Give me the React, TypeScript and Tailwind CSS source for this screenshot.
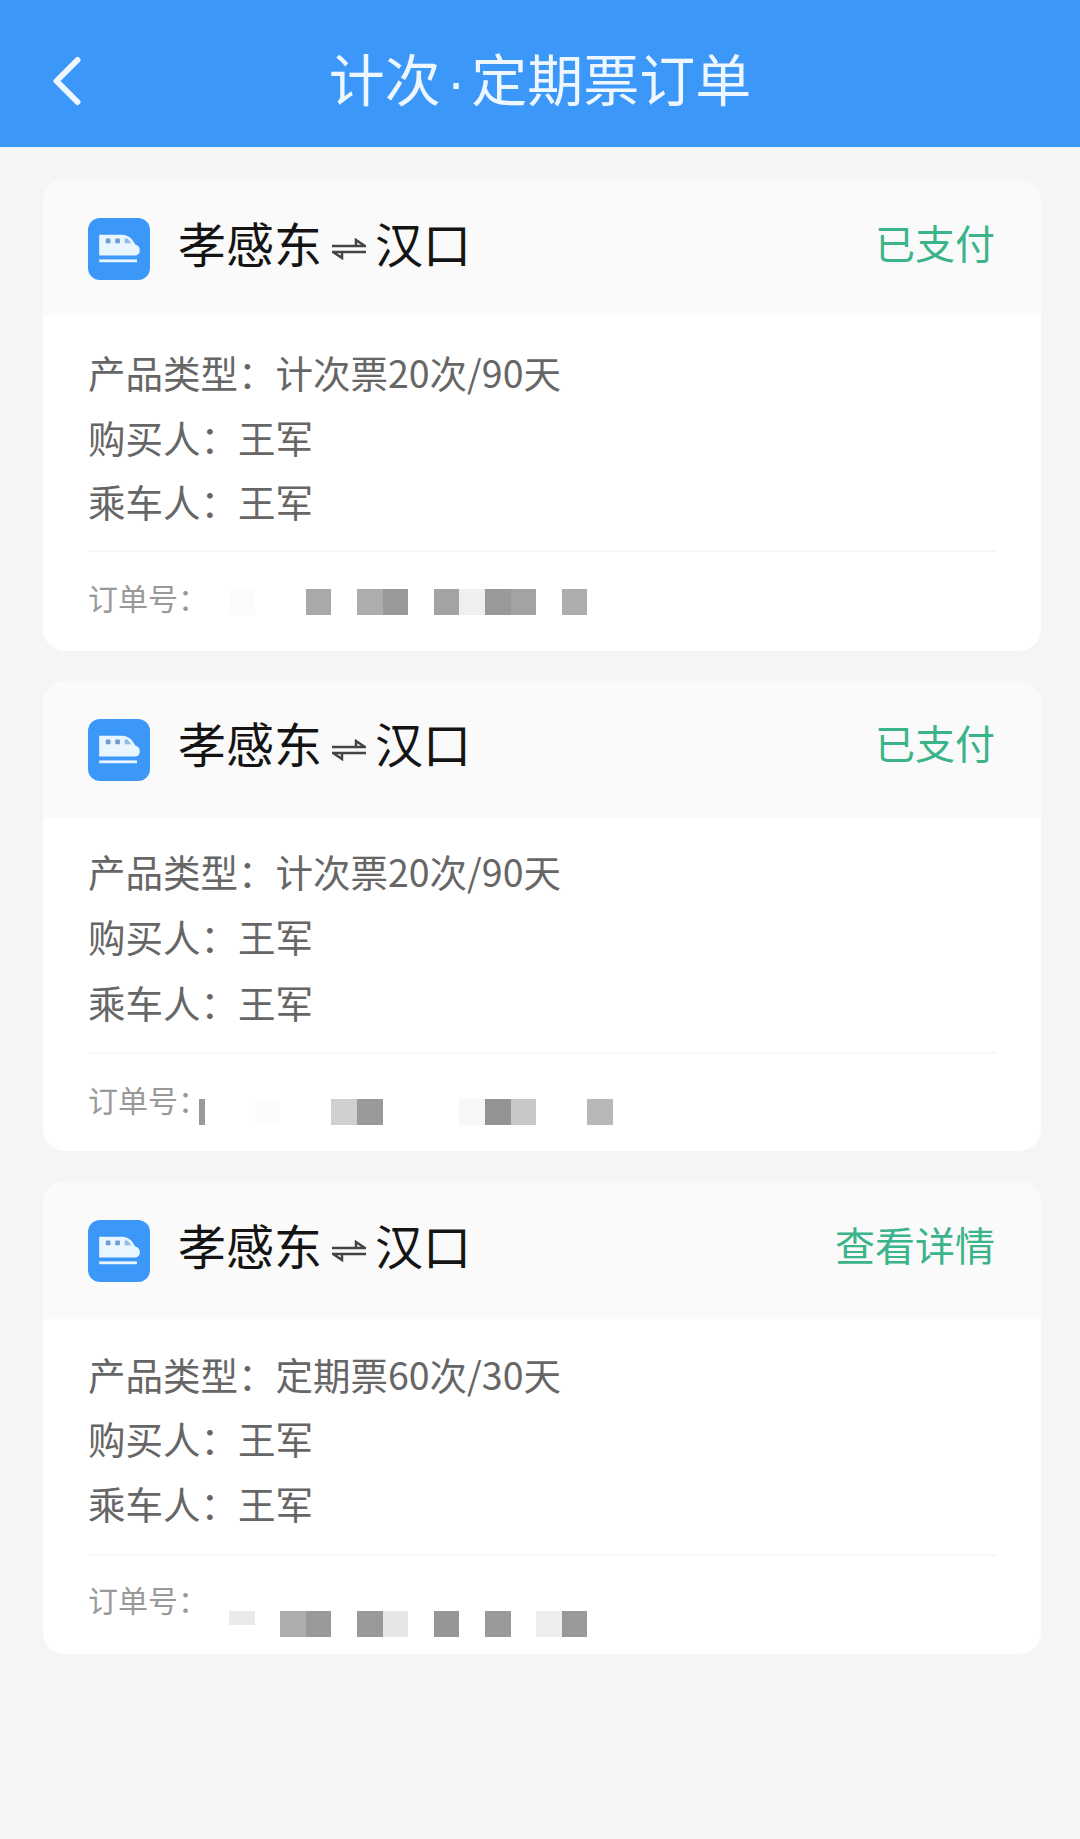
import { ChevronLeft } from 'lucide-react'

// one slot of the pixelated order number, empty string = nothing there
type Order = {
  status: string
  product: string
  cells: string[]
  thinBar?: boolean
  headerCls: string
  rowsCls: string
  firstRowCls: string
  lastRowCls: string
  footerCls: string
  mosaicCls: string
}

const orders: Order[] = [
  {
    status: '已支付',
    product: '计次票20次/90天',
    cells: ['bg-[#fbfbfb]', '', '', 'bg-[#a9a9a9]', '', 'bg-[#adadad]', 'bg-[#999999]', '', 'bg-[#a3a3a3]', 'bg-[#eef0ef]', 'bg-[#999999]', 'bg-[#a3a3a3]', '', 'bg-[#adadad]'],
    headerCls: 'h-[136px] pt-[4px]',
    rowsCls: 'pt-[25px] h-[237px]',
    firstRowCls: 'h-[65px]',
    lastRowCls: 'h-[64px]',
    footerCls: 'pt-[25px] h-[99px]',
    mosaicCls: 'mt-[12px]',
  },
  {
    status: '已支付',
    product: '计次票20次/90天',
    thinBar: true,
    cells: ['', 'bg-[#fcfcfc]', '', '', 'bg-[#d0d0d0]', 'bg-[#999999]', '', '', '', 'bg-[#f7f7f7]', 'bg-[#939393]', 'bg-[#c8c8c8]', '', '', 'bg-[#b8b8b8]'],
    headerCls: 'h-[137px]',
    rowsCls: 'pt-[21px] h-[236px]',
    firstRowCls: 'h-[65px]',
    lastRowCls: 'h-[69px]',
    footerCls: 'pt-[25px] h-[97px]',
    mosaicCls: 'mt-[20px]',
  },
  {
    status: '查看详情',
    product: '定期票60次/30天',
    cells: ['bg-[#e8ebea] !h-[14px]', '', 'bg-[#adadad]', 'bg-[#999999]', '', 'bg-[#999999]', 'bg-[#e6e6e6]', '', 'bg-[#969696]', '', 'bg-[#999999]', '', 'bg-[#eeeeee]', 'bg-[#999999]'],
    headerCls: 'h-[138px] pt-[2px]',
    rowsCls: 'pt-[23px] h-[237px]',
    firstRowCls: 'h-[64px]',
    lastRowCls: 'h-[66px]',
    footerCls: 'pt-[23px] h-[98px]',
    mosaicCls: 'mt-[32px]',
  },
]

function TrainIcon() {
  return (
    <div className="flex h-[62px] w-[62px] shrink-0 items-center justify-center rounded-[12px] bg-[#3b97f8]">
      <svg width="46" height="34" viewBox="0 0 48 36">
        <path d="M3 3h24c8 0 12 6 14 10 3 1 5 3 5 6 0 4-2 6-6 6H3z" fill="#e9f5ff" />
        <rect x="10" y="7" width="5" height="5" rx="1" fill="#6f9fcf" />
        <rect x="20" y="7" width="5" height="5" rx="1" fill="#6f9fcf" />
        <path d="M30 7h3l4 5h-7z" fill="#8fbbe6" />
        <rect x="3" y="29" width="40" height="3" fill="#e9f5ff" />
      </svg>
    </div>
  )
}

function Harpoons() {
  return (
    <svg width="34" height="22" viewBox="0 0 34 22" className="ml-[10px] mr-[9px] mt-[15px] shrink-0">
      <path d="M0 8h33L24 2v6" fill="none" stroke="#444" strokeWidth="2.5" />
      <path d="M34 14H1l9 6v-6" fill="none" stroke="#444" strokeWidth="2.5" />
    </svg>
  )
}

function OrderCard({ order }: { order: Order }) {
  return (
    <div className="overflow-hidden rounded-[22px] bg-white">
      <div className={`flex items-center justify-between bg-[#fafafa] pl-[45px] pr-[46px] ${order.headerCls}`}>
        <div className="flex items-center">
          <TrainIcon />
          <div className="ml-[28px] flex items-center pb-[15px] text-[48px] leading-none text-[#141414]">
            <span>孝感东</span>
            <Harpoons />
            <span>汉口</span>
          </div>
        </div>
        <span className="pb-[15px] text-[40px] leading-none text-[#3bb48a]">{order.status}</span>
      </div>
      <div className="px-[45px]">
        <div className={`border-b-2 border-[#f7f7f7] text-[37.5px] text-[#666666] ${order.rowsCls}`}>
          <div className={`flex items-center ${order.firstRowCls}`}>产品类型：{order.product}</div>
          <div className="flex h-[64px] items-center">购买人：王军</div>
          <div className={`flex items-center ${order.lastRowCls}`}>乘车人：王军</div>
        </div>
        <div className={`flex items-start ${order.footerCls}`}>
          <span className="w-[111px] shrink-0 whitespace-nowrap text-[30px] leading-[40px] text-[#999999]">订单号：</span>
          <div className={`flex w-[30px] shrink-0 ${order.mosaicCls}`}>
            {order.thinBar && <div className="h-[26px] w-[6px] bg-[#999999]" />}
          </div>
          <div className={`flex ${order.mosaicCls}`}>
            {order.cells.map((cell, i) => (
              <div key={i} className={`h-[26px] w-[25.6px] ${cell}`} />
            ))}
          </div>
        </div>
      </div>
    </div>
  )
}

export default function App() {
  return (
    <div className="h-[1839px] bg-[#f5f5f5] font-['Noto_Sans_CJK_SC','Noto_Sans',sans-serif]">
      <header className="relative flex h-[147px] items-center justify-center bg-[#3b97f8]">
        <ChevronLeft className="absolute left-[25px] top-[39px] h-[84px] w-[84px] text-[#eef6ff]" strokeWidth={1.7} />
        <h1 className="pt-[11px] text-[56px] leading-none font-normal text-[#eef6ff]">
          计次<span className="px-[6px] font-['Liberation_Sans',sans-serif]">·</span>定期票订单
        </h1>
      </header>
      <main className="flex flex-col gap-[30px] pl-[43px] pr-[39px] pt-[32px]">
        {orders.map((order, i) => (
          <OrderCard key={i} order={order} />
        ))}
      </main>
    </div>
  )
}
